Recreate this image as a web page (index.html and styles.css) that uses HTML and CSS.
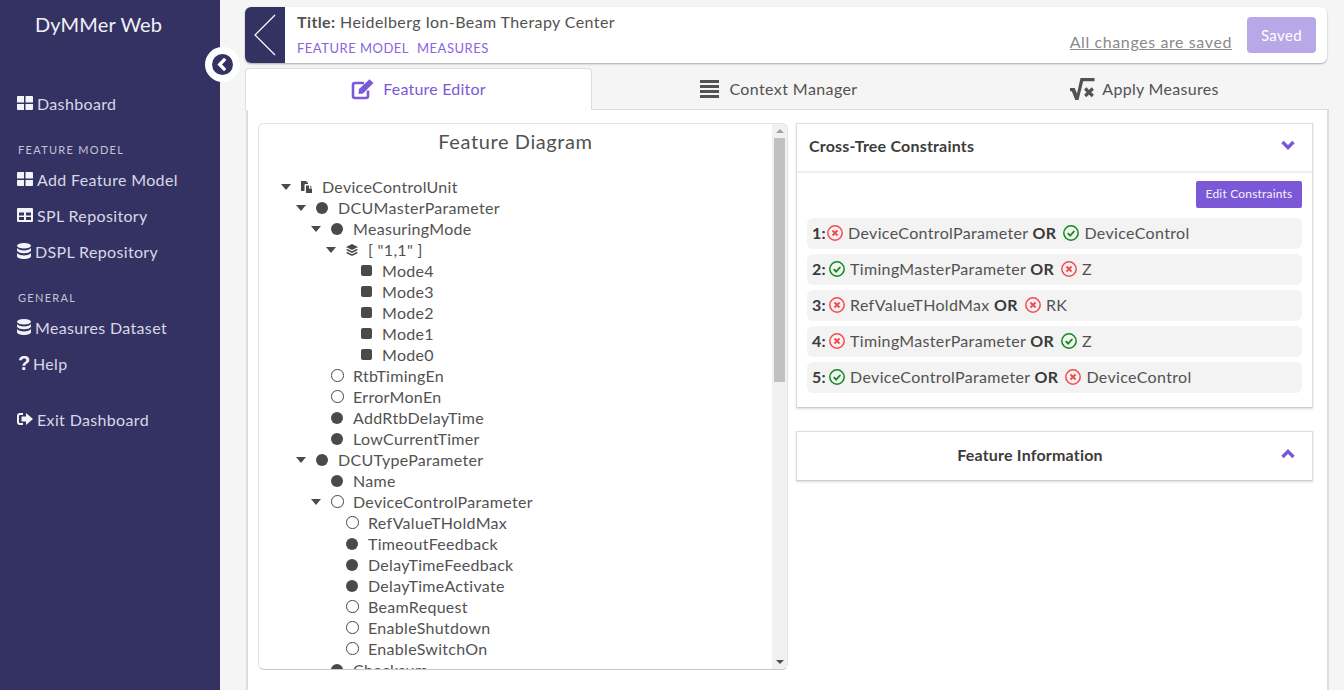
FILE: index.html
```html
<!DOCTYPE html>
<html lang="en">
<head>
<meta charset="utf-8">
<title>DyMMer Web</title>
<link rel="stylesheet" href="styles.css">
</head>
<body>
<svg class="defs" width="0" height="0" aria-hidden="true">
  <defs>
    <symbol id="i-grid" viewBox="0 0 16 14"><path d="M0 1a1 1 0 0 1 1-1h6v6.500H0zM8.500 0H15a1 1 0 0 1 1 1v5.500H8.500zM0 8h7v6H1a1 1 0 0 1-1-1zM8.500 8H16v5a1 1 0 0 1-1 1H8.500z"/></symbol>
    <symbol id="i-table" viewBox="0 0 16 14"><path fill-rule="evenodd" d="M1 0h14a1 1 0 0 1 1 1v12a1 1 0 0 1-1 1H1a1 1 0 0 1-1-1V1a1 1 0 0 1 1-1zM2 4.500v3h5v-3zM9 4.500v3h5v-3zM2 9v3h5V9zM9 9v3h5V9z"/></symbol>
    <symbol id="i-db" viewBox="0 0 14 16"><ellipse cx="7" cy="2.800" rx="7" ry="2.800"/><path d="M0 5c1 1.600 3.800 2.400 7 2.400S13 6.600 14 5v2.700c-1 1.700-3.800 2.500-7 2.500S1 9.400 0 7.700zM0 10c1 1.600 3.800 2.400 7 2.400s6-.8 7-2.400v3.200C14 14.800 10.900 16 7 16s-7-1.200-7-2.800z"/></symbol>
    <symbol id="i-x" viewBox="0 0 16 16"><circle cx="8" cy="8" r="7.200" fill="none" stroke="currentColor" stroke-width="1.500"/><path d="M5.500 5.500l5 5M10.500 5.500l-5 5" fill="none" stroke="currentColor" stroke-width="2"/></symbol>
    <symbol id="i-ok" viewBox="0 0 16 16"><circle cx="8" cy="8" r="7.200" fill="none" stroke="currentColor" stroke-width="1.500"/><path d="M4.700 8.200l2.400 2.400 4.300-4.600" fill="none" stroke="currentColor" stroke-width="1.800"/></symbol>
    <symbol id="i-caret" viewBox="0 0 10 6"><path d="M0 0h10L5 6z"/></symbol>
  </defs>
</svg>
<div class="app">
  <aside class="sidebar">
    <div class="brand">DyMMer Web</div>
    <nav class="nav">
      <a class="nav-item"><svg class="ni ni-grid"><use href="#i-grid"/></svg>Dashboard</a>
      <div class="nav-label">FEATURE MODEL</div>
      <a class="nav-item"><svg class="ni ni-grid"><use href="#i-grid"/></svg>Add Feature Model</a>
      <a class="nav-item"><svg class="ni ni-grid"><use href="#i-table"/></svg>SPL Repository</a>
      <a class="nav-item"><svg class="ni ni-db"><use href="#i-db"/></svg>DSPL Repository</a>
      <div class="nav-label">GENERAL</div>
      <a class="nav-item"><svg class="ni ni-db"><use href="#i-db"/></svg>Measures Dataset</a>
      <a class="nav-item"><span class="ni-help">?</span>Help</a>
      <a class="nav-item nav-exit"><svg class="ni ni-grid" viewBox="0 0 16 14"><path d="M6 1v2H3a1 1 0 0 0-1 1v6a1 1 0 0 0 1 1h3v2H3a3 3 0 0 1-3-3V4a3 3 0 0 1 3-3zM9 1l7 6-7 6V9.500H4.500v-5H9z"/></svg>Exit Dashboard</a>
    </nav>
  </aside>
  <button class="collapse" aria-label="Collapse">
    <svg viewBox="0 0 22 22" width="21" height="21"><circle cx="11" cy="11" r="11"/><path d="M13.800 5L8 11l5.800 6" fill="none" stroke="#fff" stroke-width="3.400"/></svg>
  </button>
  <main class="main">
    <header class="topbar">
      <div class="back"><svg viewBox="0 0 40 56" width="40" height="56"><path d="M30 8L10 28l20 20" fill="none" stroke="#fff" stroke-width="1.200"/></svg></div>
      <div class="top-info">
        <div class="top-title"><b>Title:</b> Heidelberg Ion-Beam Therapy Center</div>
        <div class="top-links"><a>FEATURE MODEL</a><a>MEASURES</a></div>
      </div>
      <div class="top-status"><u class="saved-note">All changes are saved</u><button class="saved-btn">Saved</button></div>
    </header>
    <div class="tabs">
      <div class="tab tab-active">
        <svg class="tab-ico" viewBox="0 0 24 22" width="24" height="22"><path d="M17 12.500v5.500a2 2 0 0 1-2 2H4a2 2 0 0 1-2-2V7a2 2 0 0 1 2-2h9" fill="none" stroke="currentColor" stroke-width="2.600"/><path d="M8 11L18.500 1.200l3.900 3.900L12 15.500l-4.500.5z"/></svg>
        Feature Editor
      </div>
      <div class="tab tab-context">
        <svg class="tab-ico" viewBox="0 0 19 18" width="19" height="18"><path d="M0 0h19v3H0zM0 5h19v3H0zM0 10h19v3H0zM0 15h19v3H0z"/></svg>
        Context Manager
      </div>
      <div class="tab">
        <svg class="tab-ico" viewBox="0 0 25 22" width="25" height="22"><path d="M0 10h4.700l2.300 5.500L10.500 0H24.500v3.200H13.200L8.500 22H5.300L1.800 13.200H0z"/><path d="M15.200 10.500l7.600 7.500M22.800 10.500l-7.600 7.500" fill="none" stroke="currentColor" stroke-width="3.200"/></svg>
        Apply Measures
      </div>
    </div>
    <section class="panel">
      <div class="diagram">
        <div class="tree-scroll">
          <h2 class="diagram-title">Feature Diagram</h2>
          <ul class="tree">
            <li class="d0"><svg class="caret"><use href="#i-caret"/></svg><svg class="ic ic-file" viewBox="0 0 11 12"><path d="M0 0h5l2 2v1H4.500a1 1 0 0 0-1 1v6H0zM5 4.500h3v3h3V12H5zM9 4.500l2 2H9z"/></svg>DeviceControlUnit</li>
            <li class="d1"><svg class="caret"><use href="#i-caret"/></svg><i class="dot"></i>DCUMasterParameter</li>
            <li class="d2"><svg class="caret"><use href="#i-caret"/></svg><i class="dot"></i>MeasuringMode</li>
            <li class="d3"><svg class="caret"><use href="#i-caret"/></svg><svg class="ic" viewBox="0 0 12 12"><path d="M6 0l6 3-6 3-6-3zM1.500 5L6 7.200 10.500 5 12 6 6 9 0 6zM1.500 8L6 10.200 10.500 8 12 9 6 12 0 9z"/></svg>[ "1,1" ]</li>
            <li class="d4"><i class="none"></i><i class="sq"></i>Mode4</li>
            <li class="d4"><i class="none"></i><i class="sq"></i>Mode3</li>
            <li class="d4"><i class="none"></i><i class="sq"></i>Mode2</li>
            <li class="d4"><i class="none"></i><i class="sq"></i>Mode1</li>
            <li class="d4"><i class="none"></i><i class="sq"></i>Mode0</li>
            <li class="d2"><i class="none"></i><i class="ring"></i>RtbTimingEn</li>
            <li class="d2"><i class="none"></i><i class="ring"></i>ErrorMonEn</li>
            <li class="d2"><i class="none"></i><i class="dot"></i>AddRtbDelayTime</li>
            <li class="d2"><i class="none"></i><i class="dot"></i>LowCurrentTimer</li>
            <li class="d1"><svg class="caret"><use href="#i-caret"/></svg><i class="dot"></i>DCUTypeParameter</li>
            <li class="d2"><i class="none"></i><i class="dot"></i>Name</li>
            <li class="d2"><svg class="caret"><use href="#i-caret"/></svg><i class="ring"></i>DeviceControlParameter</li>
            <li class="d3"><i class="none"></i><i class="ring"></i>RefValueTHoldMax</li>
            <li class="d3"><i class="none"></i><i class="dot"></i>TimeoutFeedback</li>
            <li class="d3"><i class="none"></i><i class="dot"></i>DelayTimeFeedback</li>
            <li class="d3"><i class="none"></i><i class="dot"></i>DelayTimeActivate</li>
            <li class="d3"><i class="none"></i><i class="ring"></i>BeamRequest</li>
            <li class="d3"><i class="none"></i><i class="ring"></i>EnableShutdown</li>
            <li class="d3"><i class="none"></i><i class="ring"></i>EnableSwitchOn</li>
            <li class="d2"><i class="none"></i><i class="dot"></i>Checksum</li>
          </ul>
        </div>
        <div class="scrollbar" aria-hidden="true">
          <div class="sb-btn"><i class="sb-up"></i></div>
          <div class="sb-thumb"></div>
          <div class="sb-btn sb-btn-end"><i class="sb-down"></i></div>
        </div>
      </div>
      <div class="side">
        <div class="card">
          <div class="card-head card-head-top">
            <span>Cross-Tree Constraints</span>
            <svg class="chev" viewBox="0 0 14 10" width="14" height="10"><path d="M1.500 2L7 7.500 12.500 2" fill="none" stroke="currentColor" stroke-width="3.400"/></svg>
          </div>
          <div class="card-body">
            <div class="edit-row"><button class="edit-btn">Edit Constraints</button></div>
            <div class="rule"><b class="num-narrow">1:</b><svg class="st bad"><use href="#i-x"/></svg>DeviceControlParameter <b>OR</b><svg class="st ok st-gap"><use href="#i-ok"/></svg>DeviceControl</div>
            <div class="rule"><b>2:</b><svg class="st ok"><use href="#i-ok"/></svg>TimingMasterParameter <b>OR</b><svg class="st bad st-gap"><use href="#i-x"/></svg>Z</div>
            <div class="rule"><b>3:</b><svg class="st bad"><use href="#i-x"/></svg>RefValueTHoldMax <b>OR</b><svg class="st bad st-gap"><use href="#i-x"/></svg>RK</div>
            <div class="rule"><b>4:</b><svg class="st bad"><use href="#i-x"/></svg>TimingMasterParameter <b>OR</b><svg class="st ok st-gap"><use href="#i-ok"/></svg>Z</div>
            <div class="rule"><b>5:</b><svg class="st ok"><use href="#i-ok"/></svg>DeviceControlParameter <b>OR</b><svg class="st bad st-gap"><use href="#i-x"/></svg>DeviceControl</div>
          </div>
        </div>
        <div class="card card-info">
          <div class="card-head card-head-center">
            <span>Feature Information</span>
            <svg class="chev" viewBox="0 0 14 10" width="14" height="10"><path d="M1.500 8L7 2.500 12.500 8" fill="none" stroke="currentColor" stroke-width="3.400"/></svg>
          </div>
        </div>
      </div>
    </section>
  </main>
</div>
</body>
</html>
```
FILE: styles.css
```css
* { box-sizing: border-box; }
html, body { margin: 0; height: 100%; overflow: hidden; }
body { font-family: "Lato", "Liberation Sans", sans-serif; font-size: 16px; color: #525252; background: #f5f5f5; }
.defs { position: absolute; }
.app { display: flex; height: 690px; position: relative; }

.sidebar { width: 220px; flex: none; background: #343263; color: #e4e3ee; }
.brand { height: 85px; padding: 11px 0 0 35px; font-size: 20px; line-height: 26px; color: #f1f1f6; letter-spacing: .15px; }
.nav-item { display: flex; align-items: center; height: 36px; padding-left: 17px; letter-spacing: .35px; color: #d9d8e6; }
.ni { fill: #f4f4f8; flex: none; margin-right: 4px; }
.ni-grid { width: 16px; height: 14px; }
.ni-db { width: 14px; height: 16px; margin-right: 4px; }
.ni-help { font-family: "Liberation Sans", sans-serif; font-weight: 700; color: #f4f4f8; font-size: 20px; line-height: 1; width: 12px; margin-left: 1px; margin-right: 3px; }
.nav-label { height: 40px; padding: 22px 0 0 18px; font-size: 11px; line-height: 14px; letter-spacing: 1.3px; color: #c3c2d6; }
.nav-exit { margin-top: 20px; }
.collapse { position: absolute; left: 205px; top: 47px; width: 35px; height: 35px; border: 0; padding: 0; border-radius: 50%; background: #fff; display: flex; align-items: center; justify-content: center; fill: #343263; }

.main { flex: 1; padding: 7px 17px 0 25px; min-width: 0; }
.topbar { display: flex; height: 56px; background: #fff; border-radius: 6px; box-shadow: 0 1px 2px rgba(0,0,0,.3); overflow: hidden; }
.back { width: 40px; flex: none; background: #343263; }
.top-info { flex: 1; padding-left: 12px; }
.top-title { margin-top: 5px; line-height: 20px; letter-spacing: .4px; }
.top-title b { font-weight: 700; }
.top-links { margin-top: 8px; font-size: 13px; line-height: 16px; color: #8a63e0; display: flex; gap: 8px; letter-spacing: .5px; }
.top-status { display: flex; align-items: flex-start; }
.saved-note { margin-top: 25px; line-height: 19px; color: #8a8a8a; letter-spacing: .6px; }
.saved-btn { margin: 10px 11px 0 15px; width: 69px; height: 36px; border: 0; border-radius: 4px; background: #b9a8e8; color: #fff; font: inherit; font-size: 15px; letter-spacing: .4px; }

.tabs { display: grid; grid-template-columns: 347px 374px 1fr; height: 41px; margin-top: 5px; margin-right: 4px; }
.tab { display: flex; align-items: center; justify-content: center; gap: 7px; letter-spacing: .3px; fill: #525252; color: #525252; padding-bottom: 1px; }
.tab-context { gap: 10px; letter-spacing: .4px; }
.tab-active { position: relative; z-index: 1; background: #fff; border: 1px solid #ddd; border-bottom: 0; border-radius: 4px 4px 0 0; color: #7b58d6; fill: #7b58d6; height: 42px; gap: 8px; letter-spacing: .2px; padding-bottom: 2px; }
.panel { display: flex; align-items: flex-start; height: 600px; margin-left: 1px; margin-right: -2px; padding: 13px 13px 0 10px; background: #fff; border: 2px solid #ddd; border-width: 1px 2px 0; }
.diagram { display: flex; width: 530px; height: 547px; flex: none; border: 1px solid #e2e2e2; border-bottom-color: #c8c8c8; border-radius: 6px; overflow: hidden; }
.tree-scroll { flex: 1; min-width: 0; overflow: hidden; }
.scrollbar { display: flex; flex-direction: column; width: 15px; flex: none; background: #f1f1f1; }
.sb-btn { display: flex; align-items: center; justify-content: center; height: 14px; flex: none; }
.sb-btn-end { margin-top: auto; }
.sb-up { width: 0; height: 0; border: solid transparent; border-width: 0 4px 4px; border-bottom-color: #a3a3a3; }
.sb-down { width: 0; height: 0; border: solid transparent; border-width: 4px 4px 0; border-top-color: #505050; }
.sb-thumb { height: 244px; margin: 0 2px; background: #c1c1c1; }
.diagram-title { margin: 0; padding-top: 4px; height: 52px; text-align: center; font-size: 20px; line-height: 26px; font-weight: 400; letter-spacing: .6px; color: #525252; }
.tree { list-style: none; margin: 0; padding: 0; }
.tree li { display: flex; align-items: center; height: 21px; letter-spacing: .3px; }
.d0 { padding-left: 22px; }
.d1 { padding-left: 37px; }
.d2 { padding-left: 52px; }
.d3 { padding-left: 67px; }
.d4 { padding-left: 82px; }
.caret { width: 10px; height: 6px; fill: #4a4a4a; margin-right: 10px; flex: none; }
.none { width: 10px; margin-right: 10px; flex: none; }
.dot, .ring, .sq { width: 12px; height: 12px; margin-right: 10px; flex: none; }
.dot { border-radius: 50%; background: #4a4a4a; }
.ring { width: 12.500px; height: 12.500px; margin-right: 9.500px; border-radius: 50%; border: 1.500px solid #4a4a4a; }
.sq { width: 11px; height: 11px; background: #4a4a4a; border-radius: 2px; }
.ic { width: 12px; height: 12px; margin-right: 10px; fill: #4a4a4a; flex: none; }
.ic-file { width: 11px; }

.side { width: 517px; margin-left: 8px; flex: none; }
.card { border: 1px solid #ddd; border-bottom-color: #ccc; box-shadow: 0 1px 2px rgba(0,0,0,.15); background: #fff; }
.card-head { display: flex; align-items: center; justify-content: space-between; height: 48px; padding: 0 17px 0 12px; font-weight: 700; color: #3c3c3c; letter-spacing: .2px; }
.card-head-top { height: 47px; padding-bottom: 5px; }
.card-head .chev { color: #7b58d6; }
.card-body { border-top: 2px solid #eee; padding: 8px 10px 14px; }
.edit-row { display: flex; justify-content: flex-end; margin-bottom: 10px; }
.edit-btn { width: 106px; height: 27px; padding: 0 0 2px; border: 0; border-radius: 2px; background: #7b58d6; color: #f4f1fc; font: inherit; font-size: 12px; letter-spacing: .2px; }
.rule { display: flex; align-items: center; height: 31px; margin-bottom: 5px; padding: 0 0 2px 5px; background: #f3f3f3; border-radius: 6px; letter-spacing: .33px; white-space: pre; }
.rule:last-child { margin-bottom: 0; }
.rule b { color: #3a3a3a; }
.num-narrow { margin-right: -2px; }
.st { width: 16px; height: 16px; flex: none; margin: 0 5px 0 3px; }
.st-gap { margin-left: 7px; }
.bad { color: #f44b50; }
.ok { color: #118a1b; }
.card-info { margin-top: 23px; }
.card-head-center { padding-left: 0; padding-bottom: 4px; }
.card-head-center span { flex: 1; text-align: center; padding-right: 18px; }
```
